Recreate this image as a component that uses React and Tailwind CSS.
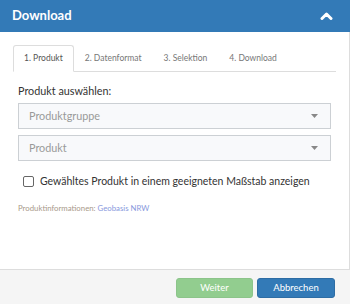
export default function App() {
  const font = { fontFamily: 'Lato, "Noto Sans", sans-serif' };
  return (
    <div className="w-[350px] h-[304px] flex flex-col bg-white overflow-hidden" style={font}>
      <div className="h-[32px] bg-[#337ab7] flex items-center justify-between pl-[12px] pr-[17px] shrink-0">
        <span className="text-white font-bold text-[13px]">Download</span>
        <svg width="13" height="8" viewBox="0 0 13 8">
          <path d="M2 6.5 L6.5 2 L11 6.5" stroke="white" strokeWidth="3" fill="none" strokeLinecap="round" strokeLinejoin="round" />
        </svg>
      </div>
      <div className="flex-1 flex flex-col border-r border-[#ddd]">
        <div className="pt-[14px] pl-[13px] pr-[13px]">
          <div className="flex border-b border-[#ddd] h-[26px] items-end">
            <div className="h-[27px] -mb-px px-[10px] flex items-center border border-[#ddd] border-b-white rounded-t-[3px] bg-white text-[8.5px] text-[#555] whitespace-nowrap">1. Produkt</div>
            <div className="h-[26px] px-[11px] flex items-center text-[8.5px] text-[#777] whitespace-nowrap">2. Datenformat</div>
            <div className="h-[26px] px-[11px] flex items-center text-[8.5px] text-[#777] whitespace-nowrap">3. Selektion</div>
            <div className="h-[26px] px-[11px] flex items-center text-[8.5px] text-[#777] whitespace-nowrap">4. Download</div>
          </div>
        </div>
        <div className="pl-[18px] pr-[18px] pt-[12px]">
          <div className="text-[10.8px] text-[#333] leading-[14px]">Produkt auswählen:</div>
          <div className="mt-[5px] h-[26px] border border-[#ccd0d4] bg-[#f8f9fb] flex items-center justify-between pl-[10px] pr-[12px]">
            <span className="text-[10.8px] text-[#999]">Produktgruppe</span>
            <svg width="7" height="4" viewBox="0 0 7 4"><path d="M0 0 L7 0 L3.5 4 Z" fill="#888" /></svg>
          </div>
          <div className="mt-[6px] h-[26px] border border-[#ccd0d4] bg-[#f8f9fb] flex items-center justify-between pl-[10px] pr-[12px]">
            <span className="text-[10.8px] text-[#999]">Produkt</span>
            <svg width="7" height="4" viewBox="0 0 7 4"><path d="M0 0 L7 0 L3.5 4 Z" fill="#888" /></svg>
          </div>
          <div className="mt-[13px] flex items-center pl-[5px]">
            <div className="w-[11px] h-[11px] border border-[#666] rounded-[2px] bg-white shrink-0" />
            <span className="ml-[6px] text-[10.5px] text-[#333] whitespace-nowrap">Gewähltes Produkt in einem geeigneten Maßstab anzeigen</span>
          </div>
          <div className="mt-[13px] text-[7.8px]">
            <span className="text-[#a8998a]">Produktinformationen: </span>
            <span className="text-[#8899dd]">Geobasis NRW</span>
          </div>
        </div>
      </div>
      <div className="h-[35px] shrink-0 border-t border-[#ddd] bg-[#f5f5f5] flex items-start justify-end pt-[8px] pr-[15px] gap-[4px]">
        <div className="w-[77px] h-[20px] rounded-[3px] bg-[#92cd8f] border border-[#8cc48a] flex items-center justify-center text-white text-[9.5px]">Weiter</div>
        <div className="w-[78px] h-[20px] rounded-[3px] bg-[#337ab7] border border-[#2e6da4] flex items-center justify-center text-white text-[9.5px]">Abbrechen</div>
      </div>
    </div>
  );
}
